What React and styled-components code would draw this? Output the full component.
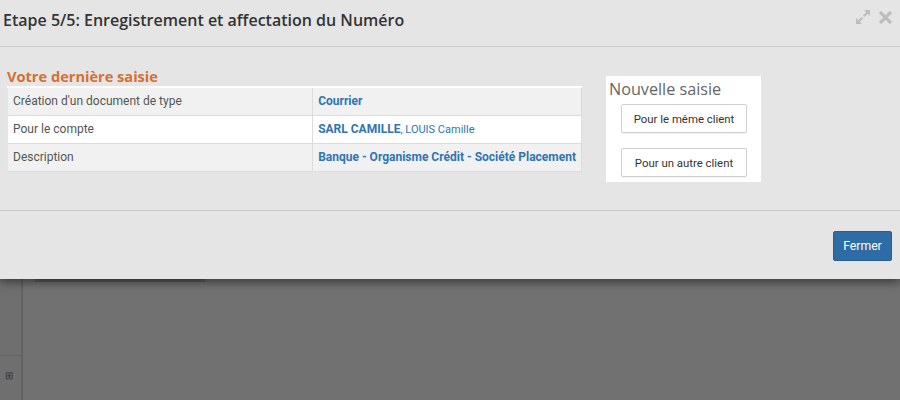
import styled, { createGlobalStyle } from 'styled-components';

// ==========================================
//            STYLES GLOBAUX
// ==========================================
const GlobalStyle = createGlobalStyle`
  html, body {
    margin: 0;
    padding: 0;
    width: 900px;
    height: 400px;
    overflow: hidden;
    background: #717171;
  }
  * { box-sizing: border-box; }
`;

// --- Page en arrière-plan (assombrie) ---
const Page = styled.div`
  position: relative;
  width: 900px;
  height: 400px;
  display: flex;
  background: #717171;
`;

const SideBar = styled.div`
  width: 23px;
  height: 100%;
  border-right: 2px solid #626262;
  background: #6f6f6f;
  display: flex;
  flex-direction: column;
  justify-content: flex-end;
`;

const SideTool = styled.div`
  height: 45px;
  border-top: 1px solid #626262;
  display: flex;
  align-items: center;
  padding: 0 0 6px 5px;
  color: #333;
  font-size: 10px;
`;

const MainArea = styled.div`
  flex: 1;
  padding: 0 0 0 12px;
`;

const HiddenBar = styled.div`
  width: 170px;
  height: 3px;
  margin-top: 279px;
  background: #5c5c5c;
`;

// --- Fenêtre modale ---
const Modal = styled.div`
  position: absolute;
  top: 0;
  left: 0;
  right: 0;
  height: 279px;
  background: #e5e5e5;
  box-shadow: 0 3px 9px rgba(0, 0, 0, 0.5);
  display: flex;
  flex-direction: column;
  font-family: Roboto, 'Liberation Sans', Arial, sans-serif;
`;

const Header = styled.div`
  height: 47px;
  border-bottom: 1px solid #c9c9c9;
  display: flex;
  align-items: flex-start;
  justify-content: space-between;
  padding: 9px 8px 0 3px;
`;

const Title = styled.h4`
  margin: 0;
  font-family: 'Open Sans', sans-serif;
  font-weight: 600;
  font-size: 16px;
  line-height: 22px;
  color: #333;
`;

const HeaderTools = styled.div`
  display: flex;
  gap: 8px;
  align-items: center;
`;

const Body = styled.div`
  height: 164px;
  border-bottom: 1px solid #c9c9c9;
  display: flex;
  align-items: flex-start;
  gap: 24px;
  padding: 20px 0 0 7px;
`;

const LastEntry = styled.div`
  width: 575px;
`;

const SectionTitle = styled.h3`
  margin: 0;
  font-family: 'Open Sans', sans-serif;
  font-weight: 700;
  font-size: 14.6px;
  line-height: 19px;
  color: #d5702f;
`;

const Table = styled.table`
  width: 100%;
  border-collapse: collapse;
  border-top: 2px solid #fff;
  font-size: 12px;
`;

const Row = styled.tr`
  background: ${(p) => (p.$striped ? '#f1f1f1' : '#fff')};
  border-bottom: 1px solid #dcdcdc;
`;

const LabelCell = styled.td`
  width: 306px;
  height: 28px;
  padding: 0 5px;
  color: #555;
  border-right: 1px solid #dcdcdc;
  border-left: 1px solid #e6e6e6;
`;

const ValueCell = styled.td`
  padding: 0 5px;
  color: #2f74b5;
  font-weight: 700;
  white-space: nowrap;
  border-right: 1px solid #dcdcdc;
`;

const Light = styled.span`
  font-weight: 400;
  font-size: 11px;
`;

const NewEntry = styled.div`
  margin-top: 9px;
  width: 155px;
  background: #fff;
  padding: 2px 0 5px 3px;
  display: flex;
  flex-direction: column;
`;

const NewTitle = styled.div`
  font-family: 'Open Sans', sans-serif;
  font-size: 16.2px;
  line-height: 22px;
  color: #666;
  margin-bottom: 4px;
`;

const ChoiceButton = styled.button`
  margin-left: 12px;
  width: 126px;
  height: 29px;
  background: #fff;
  border: 1px solid #cfcfcf;
  border-radius: 2px;
  box-shadow: 0 1px 1px rgba(0, 0, 0, 0.06);
  font-family: Roboto, 'Liberation Sans', Arial, sans-serif;
  font-size: 11.4px;
  color: #333;
  & + & {
    margin-top: 15px;
  }
`;

const Footer = styled.div`
  flex: 1;
  display: flex;
  justify-content: flex-end;
  align-items: flex-start;
  padding: 20px 8px 0 0;
`;

const PrimaryButton = styled.button`
  width: 59px;
  height: 30px;
  background: #2d6ca5;
  border: 1px solid #285f90;
  border-radius: 2px;
  color: #fff;
  font-family: Roboto, 'Liberation Sans', Arial, sans-serif;
  font-size: 12.2px;
`;

// ==========================================
//            ICÔNES
// ==========================================
const ExpandIcon = () => (
  <svg width="16" height="16" viewBox="0 0 16 16">
    <g fill="#bdbdbd">
      <polygon points="9,1 15,1 15,7 12.8,4.8 9.5,8.1 7.9,6.5 11.2,3.2" />
      <polygon points="1,15 1,9 3.2,11.2 6.5,7.9 8.1,9.5 4.8,12.8 7,15" />
    </g>
  </svg>
);

const CloseIcon = () => (
  <svg width="13" height="13" viewBox="0 0 12 12">
    <path d="M2 2 L10 10 M10 2 L2 10" stroke="#bdbdbd" strokeWidth="3" strokeLinecap="square" />
  </svg>
);

// ==========================================
//          COMPOSANT PRINCIPAL
// ==========================================
export default function App() {
  const lignes = [
    { label: "Création d'un document de type", value: 'Courrier' },
    {
      label: 'Pour le compte',
      value: (
        <>
          SARL CAMILLE<Light>, LOUIS Camille</Light>
        </>
      ),
    },
    { label: 'Description', value: 'Banque - Organisme Crédit - Société Placement' },
  ];

  return (
    <>
      <GlobalStyle />
      <Page>
        <SideBar>
          <SideTool>⊞</SideTool>
        </SideBar>
        <MainArea>
          <HiddenBar />
        </MainArea>

        <Modal>
          <Header>
            <Title>Etape 5/5: Enregistrement et affectation du Numéro</Title>
            <HeaderTools>
              <ExpandIcon />
              <CloseIcon />
            </HeaderTools>
          </Header>

          <Body>
            <LastEntry>
              <SectionTitle>Votre dernière saisie</SectionTitle>
              <Table>
                <tbody>
                  {lignes.map((l, i) => (
                    <Row key={i} $striped={i % 2 === 0}>
                      <LabelCell>{l.label}</LabelCell>
                      <ValueCell>{l.value}</ValueCell>
                    </Row>
                  ))}
                </tbody>
              </Table>
            </LastEntry>

            <NewEntry>
              <NewTitle>Nouvelle saisie</NewTitle>
              <ChoiceButton>Pour le même client</ChoiceButton>
              <ChoiceButton>Pour un autre client</ChoiceButton>
            </NewEntry>
          </Body>

          <Footer>
            <PrimaryButton>Fermer</PrimaryButton>
          </Footer>
        </Modal>
      </Page>
    </>
  );
}
